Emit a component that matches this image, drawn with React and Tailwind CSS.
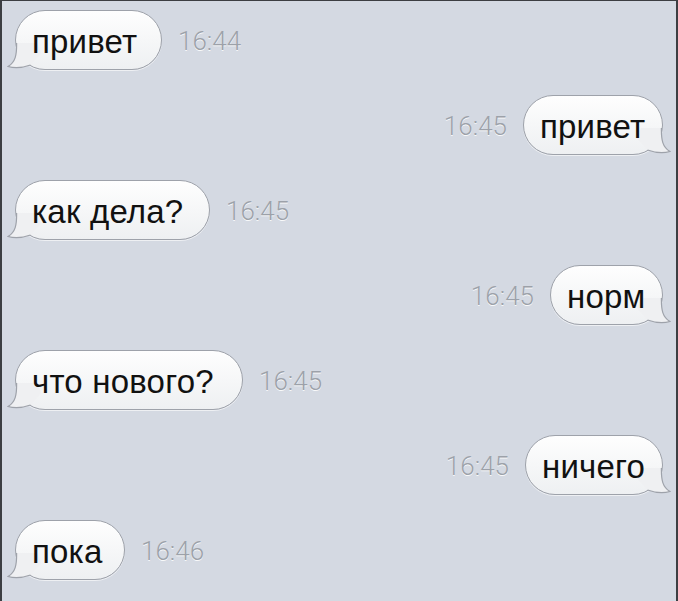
import React from "react";

const messages = [
  { id: 1, text: "привет", time: "16:44", side: "left", w: "w-[147px]" },
  { id: 2, text: "привет", time: "16:45", side: "right", w: "w-[140px]" },
  { id: 3, text: "как дела?", time: "16:45", side: "left", w: "w-[195px]" },
  { id: 4, text: "норм", time: "16:45", side: "right", w: "w-[113px]" },
  { id: 5, text: "что нового?", time: "16:45", side: "left", w: "w-[228px]" },
  { id: 6, text: "ничего", time: "16:45", side: "right", w: "w-[138px]" },
  { id: 7, text: "пока", time: "16:46", side: "left", w: "w-[110px]" },
];

function Tail({ right }) {
  // bubble edge sits at x=9, bubble bottom at y=26
  return (
    <svg
      width="40"
      height="28"
      viewBox="0 0 40 28"
      className={`absolute bottom-[-2px] ${right ? "right-[-9px] -scale-x-100" : "left-[-9px]"}`}
    >
      <path d="M9.6 0 C9.8 12 8.5 19 1 23.5 C8 25.5 15 25 23.5 22 L34 10 L30 0 Z" fill="#eff0f2" />
      <path d="M9.6 0 C9.8 12 8.5 19 1 23.5 C8 25.5 15 25 23.5 22" fill="none" stroke="#9ea2aa" strokeWidth="1.2" />
    </svg>
  );
}

function Bubble({ m }) {
  const right = m.side === "right";
  return (
    <div className={`relative h-[60px] ${m.w} rounded-[30px] border border-[#9ea2aa] bg-gradient-to-b from-[#fefefe] to-[#eef0f2] shadow-[0_1px_0_rgba(255,255,255,0.6)] flex items-center justify-start pl-[16px] pt-[3px]`}>
      <Tail right={right} />
      <span className="relative text-[33px] leading-none text-[#111] tracking-[0.2px]" style={{ fontFamily: '"Liberation Sans", Arial, sans-serif' }}>{m.text}</span>
    </div>
  );
}

function Time({ t }) {
  return (
    <span
      className="text-[26px] font-light text-[#9ca1a9] [text-shadow:0_1px_0_rgba(255,255,255,0.85)] pt-[2px]"
      style={{ fontFamily: 'Roboto, "Liberation Sans", sans-serif' }}
    >
      {t}
    </span>
  );
}

export default function App() {
  return (
    <div className="w-[678px] h-[601px] overflow-hidden bg-[#d4d9e2] border-l-[2px] border-t border-r-[2px] border-[#3c3e42]">
      <div className="flex flex-col gap-[25px] pt-[9px] pl-[13px] pr-[13px]">
        {messages.map(m => (
          <div key={m.id} className={`flex items-center gap-[16px] ${m.side === "right" ? "justify-end" : "justify-start"}`}>
            {m.side === "right" ? (
              <>
                <Time t={m.time} />
                <Bubble m={m} />
              </>
            ) : (
              <>
                <Bubble m={m} />
                <Time t={m.time} />
              </>
            )}
          </div>
        ))}
      </div>
    </div>
  );
}
